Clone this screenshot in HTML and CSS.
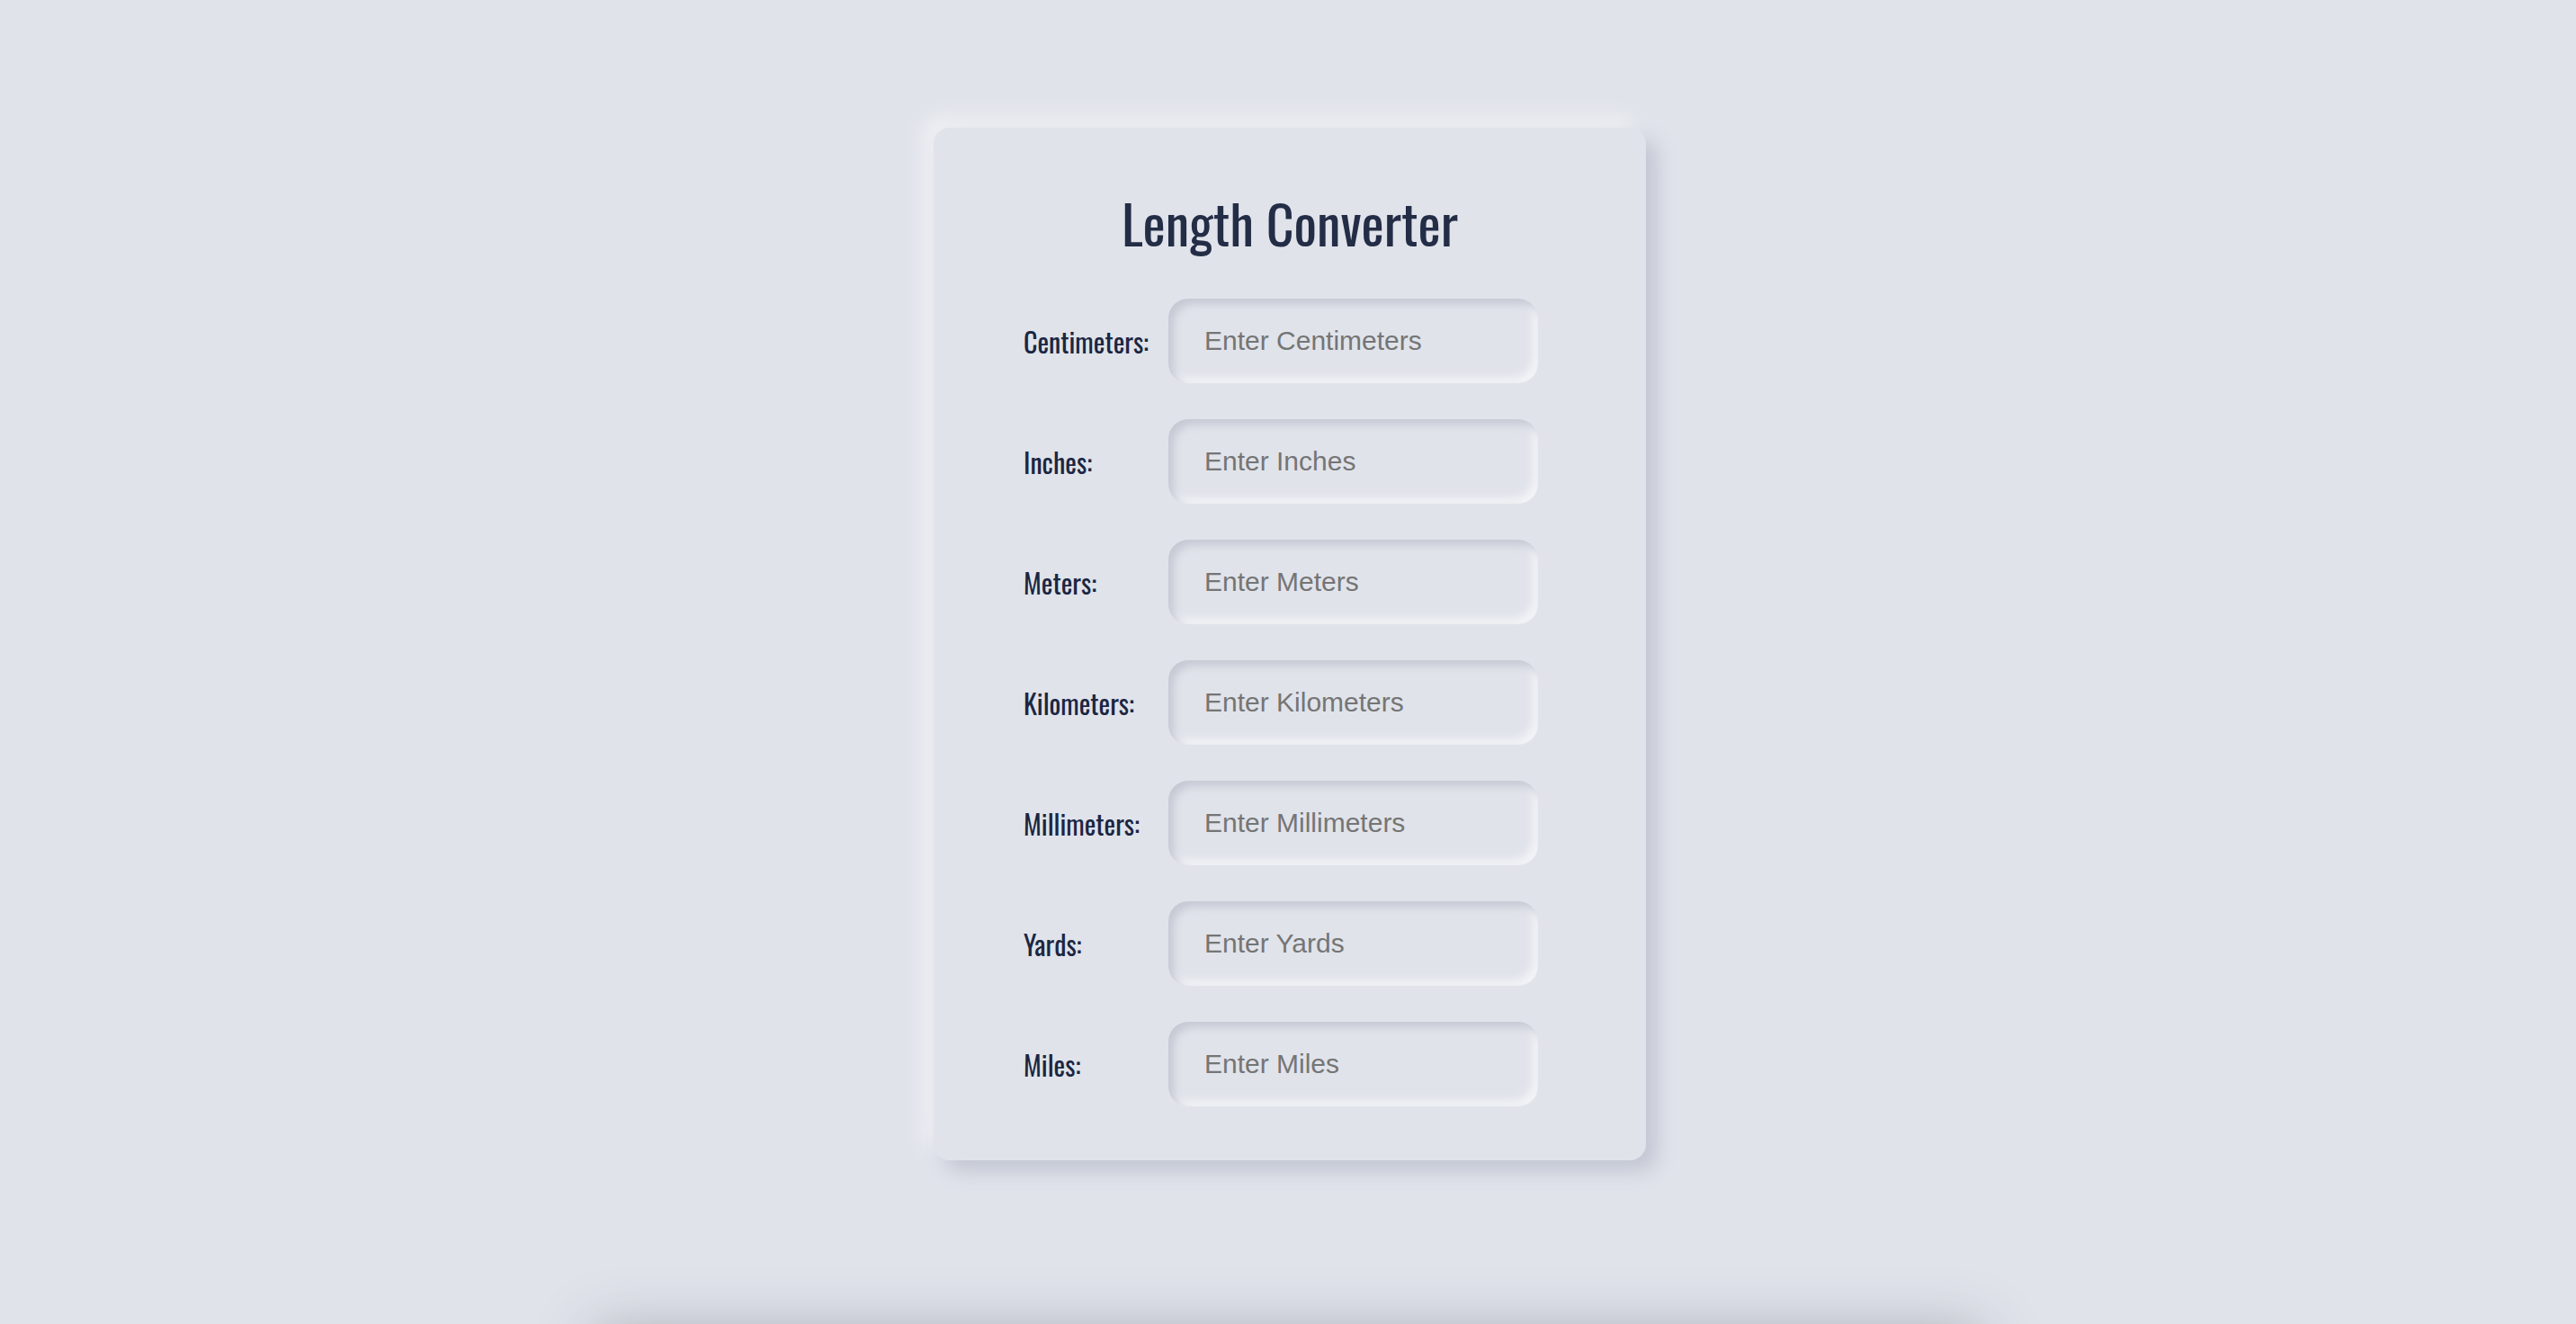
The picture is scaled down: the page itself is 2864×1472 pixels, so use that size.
FILE: index.html
```html
<!DOCTYPE html>
<html lang="en">
<head>
<meta charset="utf-8">
<title>Length Converter</title>
<link rel="stylesheet" href="styles.css">
</head>
<body>
<main class="card">
  <h1 class="title">Length Converter</h1>
  <div class="fields">
    <label class="label" for="cm">Centimeters:</label>
    <input class="input" id="cm" type="number" placeholder="Enter Centimeters">
    <label class="label" for="in">Inches:</label>
    <input class="input" id="in" type="number" placeholder="Enter Inches">
    <label class="label" for="m">Meters:</label>
    <input class="input" id="m" type="number" placeholder="Enter Meters">
    <label class="label" for="km">Kilometers:</label>
    <input class="input" id="km" type="number" placeholder="Enter Kilometers">
    <label class="label" for="mm">Millimeters:</label>
    <input class="input" id="mm" type="number" placeholder="Enter Millimeters">
    <label class="label" for="yd">Yards:</label>
    <input class="input" id="yd" type="number" placeholder="Enter Yards">
    <label class="label" for="mi">Miles:</label>
    <input class="input" id="mi" type="number" placeholder="Enter Miles">
  </div>
</main>
<footer class="footer"></footer>
</body>
</html>
```
FILE: styles.css
```css
html, body {
  margin: 0;
  padding: 0;
  overflow: hidden;
}
body {
  background: #e0e3ea;
  min-height: 100vh;
  display: flex;
  flex-direction: column;
  align-items: center;
  padding-top: 142px;
  font-family: "Liberation Sans", Arial, sans-serif;
}
.card {
  box-sizing: border-box;
  width: 792px;
  height: 1148px;
  margin-left: 4px;
  padding: 69px 0 0 0;
  background: #e0e3ea;
  border-radius: 18px;
  box-shadow: 12px 12px 22px #c2c6d3, -12px -12px 22px #eff0f4;
}
.title {
  margin: 0 0 50px 0;
  font-family: "Oswald", "Liberation Sans Narrow", sans-serif;
  font-weight: 400;
  font-size: 60px;
  line-height: 71px;
  color: #232d46;
  text-align: center;
}
.fields {
  display: grid;
  grid-template-columns: 161px 411px;
  row-gap: 40px;
  padding-left: 100px;
  align-items: center;
}
.label {
  font-family: "Oswald", "Liberation Sans Narrow", sans-serif;
  font-size: 30px;
  font-weight: 400;
  color: #1b2642;
}
.input {
  box-sizing: border-box;
  width: 411px;
  height: 94px;
  border: none;
  outline: none;
  border-radius: 22px;
  background: #e0e3ea;
  padding: 0 0 0 40px;
  font-family: "Liberation Sans", Arial, sans-serif;
  font-size: 30px;
  color: #333;
  box-shadow: inset 6px 6px 10px #c6c9d4, inset -6px -6px 10px #f3f4f7;
  -moz-appearance: textfield;
}
.input::-webkit-outer-spin-button,
.input::-webkit-inner-spin-button {
  -webkit-appearance: none;
  margin: 0;
}
.input::placeholder {
  color: #757575;
}
.footer {
  flex: none;
  width: 1540px;
  height: 200px;
  margin-top: 200px;
  background: #e0e3ea;
  box-shadow: 0 -10px 60px rgba(60, 64, 72, 0.34);
}
```
